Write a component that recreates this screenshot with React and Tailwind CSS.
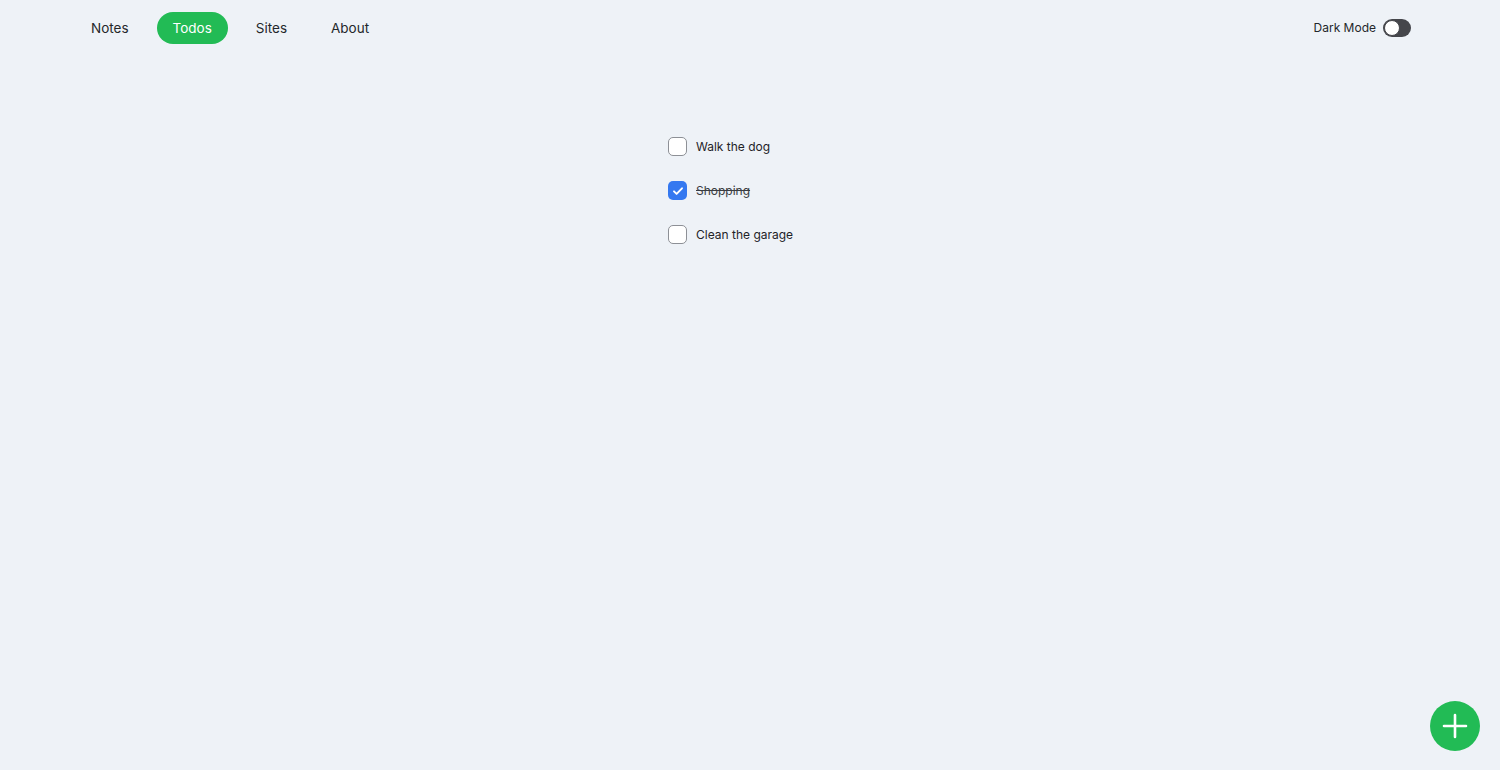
import { useState } from "react";

const tabs = ["Notes", "Todos", "Sites", "About"];

const initialTodos = [
  { id: 1, text: "Walk the dog", done: false },
  { id: 2, text: "Shopping", done: true },
  { id: 3, text: "Clean the garage", done: false },
];

const App = () => {
  const [todos, setTodos] = useState(initialTodos);
  const active = "Todos";

  const toggle = (id) =>
    setTodos(todos.map((t) => (t.id === id ? { ...t, done: !t.done } : t)));

  return (
    <div
      className="min-h-screen bg-[#eef2f7] text-[#1f2328]"
      style={{ fontFamily: "Inter, 'Noto Sans', sans-serif" }}
    >
      {/* Top nav */}
      <header className="flex items-center justify-between pl-[75px] pr-[89px] pt-3">
        <nav className="flex items-center gap-3">
          {tabs.map((tab) => (
            <a
              key={tab}
              href="#"
              className={
                tab === active
                  ? "rounded-full bg-[#22bb55] px-4 py-1.5 text-[13.5px] leading-5 text-white"
                  : "rounded-full px-4 py-1.5 text-[13.5px] leading-5 text-[#24272b]"
              }
            >
              {tab}
            </a>
          ))}
        </nav>
        <div className="flex items-center gap-[7px]">
          <span className="text-[12px] text-[#24272b]">Dark Mode</span>
          <button className="flex h-[18px] w-[28px] items-center rounded-full bg-[#45464b] p-[1px]">
            <span className="h-4 w-4 rounded-full border-[1.5px] border-[#45464b] bg-white" />
          </button>
        </div>
      </header>

      {/* Todo list */}
      <main className="mx-auto mt-[93px] flex w-[164px] flex-col gap-[25px]">
        {todos.map((todo) => (
          <label key={todo.id} className="flex h-[19px] items-center gap-[9px]">
            <button
              onClick={() => toggle(todo.id)}
              className={
                todo.done
                  ? "flex h-[19px] w-[19px] items-center justify-center rounded-[5px] bg-[#3478f0]"
                  : "h-[19px] w-[19px] rounded-[5px] border-[1.5px] border-[#8d9096] bg-white"
              }
            >
              {todo.done && (
                <svg width="12" height="12" viewBox="0 0 12 12" fill="none">
                  <path
                    d="M2 6.3l2.6 2.6L10 3.3"
                    stroke="white"
                    strokeWidth="1.9"
                    strokeLinecap="round"
                    strokeLinejoin="round"
                  />
                </svg>
              )}
            </button>
            <span
              className={
                todo.done
                  ? "whitespace-nowrap text-[12px] text-[#3a3d42] line-through"
                  : "whitespace-nowrap text-[12px] text-[#1f2328]"
              }
            >
              {todo.text}
            </span>
          </label>
        ))}
      </main>

      {/* Add button */}
      <button className="fixed bottom-[19px] right-[20px] flex h-[50px] w-[50px] items-center justify-center rounded-full bg-[#22bb55]">
        <svg width="26" height="26" viewBox="0 0 26 26" fill="none">
          <path
            d="M13 2v22M2 13h22"
            stroke="white"
            strokeWidth="2.6"
            strokeLinecap="round"
          />
        </svg>
      </button>
    </div>
  );
};

export default App;
